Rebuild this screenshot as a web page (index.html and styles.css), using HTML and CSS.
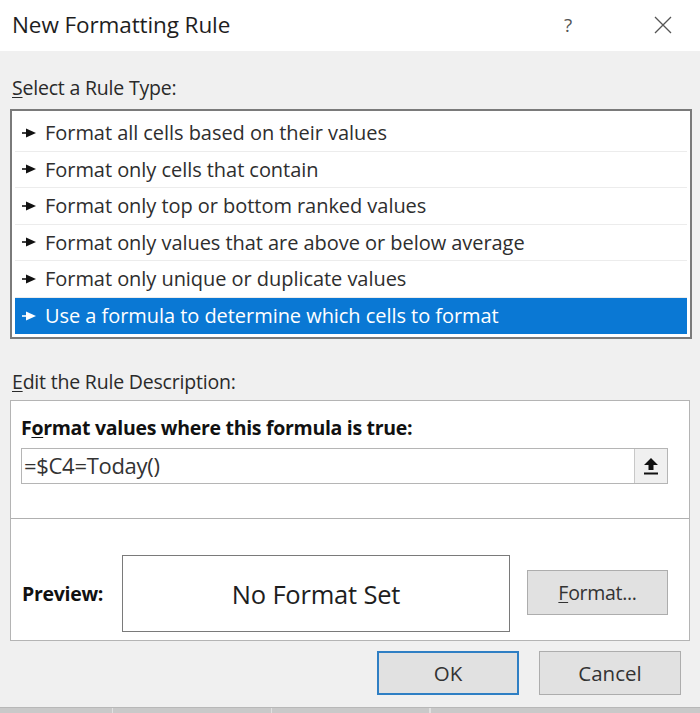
FILE: index.html
```html
<!DOCTYPE html>
<html lang="en">
<head>
<meta charset="utf-8">
<title>New Formatting Rule</title>
<link rel="stylesheet" href="styles.css">
</head>
<body>
<div class="dialog">
  <div class="titlebar">
    <span class="title">New Formatting Rule</span>
    <span class="help">?</span>
    <span class="close">
      <svg width="18" height="18" viewBox="0 0 18 18"><path d="M1 1 L17 17 M17 1 L1 17" stroke="#555" stroke-width="1.3" fill="none"/></svg>
    </span>
  </div>
  <div class="content">
    <div class="label label-top"><u>S</u>elect a Rule Type:</div>
    <div class="list">
      <div class="row"><svg class="arr" width="15" height="10" viewBox="0 0 15 10"><path d="M0 5 H6" stroke="currentColor" stroke-width="1.6"/><path d="M4 0.5 L14 5 L4 9.5 Z" fill="currentColor"/></svg><span>Format all cells based on their values</span></div>
      <div class="row"><svg class="arr" width="15" height="10" viewBox="0 0 15 10"><path d="M0 5 H6" stroke="currentColor" stroke-width="1.6"/><path d="M4 0.5 L14 5 L4 9.5 Z" fill="currentColor"/></svg><span>Format only cells that contain</span></div>
      <div class="row"><svg class="arr" width="15" height="10" viewBox="0 0 15 10"><path d="M0 5 H6" stroke="currentColor" stroke-width="1.6"/><path d="M4 0.5 L14 5 L4 9.5 Z" fill="currentColor"/></svg><span>Format only top or bottom ranked values</span></div>
      <div class="row"><svg class="arr" width="15" height="10" viewBox="0 0 15 10"><path d="M0 5 H6" stroke="currentColor" stroke-width="1.6"/><path d="M4 0.5 L14 5 L4 9.5 Z" fill="currentColor"/></svg><span>Format only values that are above or below average</span></div>
      <div class="row"><svg class="arr" width="15" height="10" viewBox="0 0 15 10"><path d="M0 5 H6" stroke="currentColor" stroke-width="1.6"/><path d="M4 0.5 L14 5 L4 9.5 Z" fill="currentColor"/></svg><span>Format only unique or duplicate values</span></div>
      <div class="row selected"><svg class="arr" width="15" height="10" viewBox="0 0 15 10"><path d="M0 5 H6" stroke="currentColor" stroke-width="1.6"/><path d="M4 0.5 L14 5 L4 9.5 Z" fill="currentColor"/></svg><span>Use a formula to determine which cells to format</span></div>
    </div>
    <div class="label label-edit"><u>E</u>dit the Rule Description:</div>
    <div class="desc">
      <div class="desc-top">
        <div class="bold-label">F<u>o</u>rmat values where this formula is true:</div>
        <div class="input">
          <span class="input-text">=$C4=Today()</span>
          <span class="ref-btn">
            <svg width="16" height="18" viewBox="0 0 16 18"><path d="M8 1 L15 8 H10.5 V13 H5.5 V8 H1 Z" fill="#111"/><rect x="1" y="15.5" width="14" height="2" fill="#111"/></svg>
          </span>
        </div>
      </div>
      <div class="preview-row">
        <div class="bold-label preview-label">Preview:</div>
        <div class="preview-box">No Format Set</div>
        <div class="btn format-btn"><u>F</u>ormat...</div>
      </div>
    </div>
    <div class="actions">
      <div class="btn action ok">OK</div>
      <div class="btn action">Cancel</div>
    </div>
  </div>
  <div class="sheet">
    <span class="cell c1"></span><span class="cell c2"></span><span class="cell c3"></span><span class="cell c4"></span>
  </div>
</div>
</body>
</html>
```

FILE: styles.css
```css
* { box-sizing: border-box; }
html, body {
  margin: 0;
  padding: 0;
  width: 700px;
  height: 713px;
  overflow: hidden;
  background: #f0f0f0;
  font-family: "Open Sans", "Noto Sans", sans-serif;
  color: #333;
}
u { text-decoration-thickness: 1px; text-underline-offset: 2px; }
.dialog {
  display: flex;
  flex-direction: column;
  height: 713px;
}
.titlebar {
  height: 51px;
  background: #ffffff;
  display: flex;
  align-items: center;
  padding: 0 0 2px 12px;
}
.title {
  font-size: 22.5px;
  color: #1e1e1e;
  flex: 1;
  letter-spacing: -0.1px;
}
.help {
  font-size: 19px;
  color: #555;
  width: 90px;
  text-align: left;
}
.close {
  width: 46px;
  display: flex;
  align-items: center;
}
.content {
  flex: 1;
  display: flex;
  flex-direction: column;
  padding: 0 8px 0 10px;
}
.label {
  font-size: 19.5px;
  color: #2a2a2a;
  padding-left: 2px;
  height: 24px;
  line-height: 24px;
  letter-spacing: -0.2px;
}
.label-top { margin-top: 25px; margin-bottom: 9px; }
.list {
  width: 682px;
  background: #fff;
  border: 2px solid #7a7a7a;
  padding: 4px 3px 3px 3px;
  display: flex;
  flex-direction: column;
}
.row {
  height: 36.5px;
  display: flex;
  align-items: center;
  padding-left: 7px;
  font-size: 20px;
  color: #2e2e2e;
  border-bottom: 1px solid #ececec;
  letter-spacing: -0.05px;
}
.row .arr { color: #111; margin-right: 8px; flex: none; }
.row.selected {
  background: #0a78d4;
  color: #ffffff;
  border-bottom: none;
}
.row.selected .arr { color: #ffffff; }
.label-edit { margin-top: 31px; margin-bottom: 6px; }
.desc {
  width: 680px;
  height: 241px;
  background: #fff;
  border: 1px solid #b4b4b4;
  display: flex;
  flex-direction: column;
}
.desc-top {
  height: 118px;
  flex: none;
  border-bottom: 1px solid #b0b0b0;
  padding: 14px 0 0 10px;
}
.bold-label {
  font-weight: 700;
  font-size: 19.5px;
  color: #111;
  letter-spacing: -0.3px;
  line-height: 26px;
}
.input {
  margin-top: 7px;
  width: 647px;
  height: 36px;
  border: 1px solid #b5b5b5;
  display: flex;
  align-items: stretch;
}
.input-text {
  flex: 1;
  font-size: 22px;
  color: #333;
  padding-left: 2px;
  line-height: 32px;
  letter-spacing: -0.3px;
}
.ref-btn {
  width: 33px;
  background: #f0f0f0;
  border-left: 1px solid #c8c8c8;
  display: flex;
  align-items: center;
  justify-content: center;
}
.preview-row {
  flex: 1;
  display: flex;
  align-items: center;
  padding: 28px 0 0 11px;
}
.preview-label { width: 100px; }
.preview-box {
  width: 388px;
  height: 77px;
  border: 1px solid #7a7a7a;
  display: flex;
  align-items: center;
  justify-content: center;
  font-size: 25.5px;
  color: #1e1e1e;
  letter-spacing: -0.2px;
}
.btn {
  background: #e1e1e1;
  border: 1px solid #adadad;
  display: flex;
  align-items: center;
  justify-content: center;
  color: #333;
}
.format-btn {
  width: 141px;
  height: 45px;
  margin-left: 17px;
  margin-top: -2px;
  font-size: 19.5px;
  letter-spacing: -0.3px;
}
.actions {
  display: flex;
  justify-content: flex-end;
  gap: 20px;
  padding: 10px 11px 0 0;
}
.action {
  width: 142px;
  height: 44px;
  font-size: 20.5px;
}
.ok { border: 2px solid #2f7fc4; }
.sheet {
  height: 6px;
  background: #c9c9c9;
  border-top: 1px solid #b8b8b8;
  display: flex;
  margin-top: 7px;
}
.cell { border-right: 1px solid #e0e0e0; height: 100%; }
.c1 { width: 113px; }
.c2 { width: 159px; }
.c3 { width: 158px; }
.c4 { width: 0; }
```
